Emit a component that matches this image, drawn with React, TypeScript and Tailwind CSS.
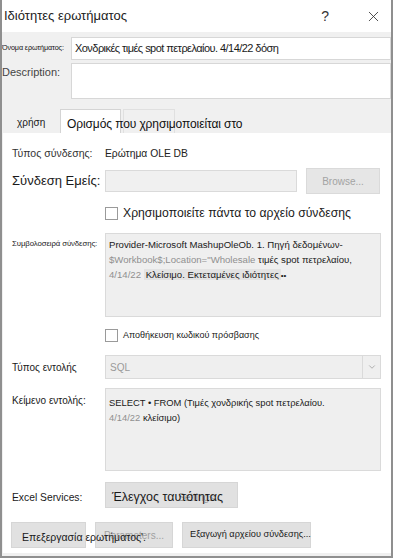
import React from 'react';
import { X, ChevronDown } from 'lucide-react';

const font = { fontFamily: '"Liberation Sans", "Noto Sans", Arial, sans-serif' };

const Checkbox: React.FC<{ label: string; className?: string }> = ({ label, className }) => (
  <div className={`flex items-center h-[17px] ${className ?? ''}`}>
    <span className="w-[13px] h-[13px] border border-[#9a9a9a] bg-white shrink-0" />
    <span className="ml-[5px] whitespace-nowrap">{label}</span>
  </div>
);

const App: React.FC = () => {
  return (
    <div
      className="w-[393px] h-[558px] bg-[#f0f0f0] border-x-2 border-b-2 border-[#8f8f8f] text-[#1a1a1a] flex flex-col overflow-hidden"
      style={font}
    >
      {/* title bar */}
      <div className="h-[32px] bg-white flex items-center shrink-0 -mx-[2px] pl-[4px] pr-[11px]">
        <span className="text-[13px] text-[#222]">Ιδιότητες ερωτήματος</span>
        <span className="ml-auto text-[14px] mr-[36px] text-[#333]">?</span>
        <X size={17} strokeWidth={1.2} className="text-[#333]" />
      </div>

      {/* name + description */}
      <div className="flex items-center mt-[5px] h-[23px]">
        <span className="w-[69px] text-[7.2px] tracking-[-0.1px] whitespace-nowrap text-[#111]">Όνομα ερωτήματος:</span>
        <div className="flex-1 h-full bg-white border border-[#d7d7d7] flex items-center px-[3px] text-[11px] tracking-[-0.55px] whitespace-nowrap overflow-hidden">
          Χονδρικές τιμές spot πετρελαίου. 4/14/22 δόση
        </div>
      </div>
      <div className="flex mt-[3px] h-[36px]">
        <span className="w-[69px] text-[11px] pt-[1px] text-[#444]">Description:</span>
        <div className="flex-1 h-full bg-white border border-[#d7d7d7]" />
      </div>

      {/* tabs */}
      <div className="flex items-end h-[25px] mt-[9px]">
        <div className="w-[55px] h-[22px] flex items-center pl-[15px] text-[10px]">χρήση</div>
        <div className="w-[61px] h-[24px] ml-[3px] bg-white border-x border-t border-[#d4d4d4] relative">
          <span className="absolute left-[6px] top-[5px] text-[12px] tracking-[-0.1px] whitespace-nowrap text-[#111]">
            Ορισμός που χρησιμοποιείται στο
          </span>
        </div>
        <div className="w-[52px] h-[24px] ml-[2px] border-x border-t border-[#e0e0e0]" />
      </div>

      {/* panel */}
      <div className="flex-1 bg-white ml-[1px] mb-[3px] pl-[9px] pr-[9px] flex flex-col text-[10px]">
        <div className="flex items-center h-[16px] mt-[13px] text-[#333]">
          <span className="w-[93px] text-[10.5px]">Τύπος σύνδεσης:</span>
          <span className="text-[#222] text-[10.3px]">Ερώτημα OLE DB</span>
        </div>

        <div className="flex items-center h-[26px] mt-[6px]">
          <span className="w-[93px] text-[13px] whitespace-nowrap">Σύνδεση Εμείς:</span>
          <div className="w-[192px] h-[22px] bg-[#f0f0f0] border border-[#dadada]" />
          <div className="ml-[9px] w-[74px] h-[26px] bg-[#e6e6e6] border border-[#dadada] flex items-center justify-center text-[#a3a3a3] text-[10px]">
            Browse...
          </div>
        </div>

        <Checkbox label="Χρησιμοποιείτε πάντα το αρχείο σύνδεσης" className="ml-[93px] mt-[11px] text-[12.2px]" />

        <div className="flex mt-[11px]">
          <span className="w-[93px] text-[7.8px] tracking-[-0.1px] pt-[5px] whitespace-nowrap">Συμβολοσειρά σύνδεσης:</span>
          <div className="w-[276px] h-[84px] bg-[#efefef] border border-[#dadada] px-[3px] pt-[3px] leading-[15px] whitespace-nowrap text-[9.6px]">
            <div>Provider-Microsoft MashupOleOb. 1. Πηγή δεδομένων-</div>
            <div>
              <span className="text-[#8f8f8f]">$Workbook$;Location="Wholesale</span> τιμές spot πετρελαίου,
            </div>
            <div>
              <span className="text-[#8f8f8f]">4/14/22</span>{'  '}
              <span className="bg-[#e3e3e3] px-[2px]">Κλείσιμο. Εκτεταμένες ιδιότητες</span>
              <span className="text-[8px]">••</span>
            </div>
          </div>
        </div>

        <Checkbox label="Αποθήκευση κωδικού πρόσβασης" className="ml-[93px] mt-[10px] text-[9px]" />

        <div className="flex items-center mt-[11px] h-[24px]">
          <span className="w-[93px]">Τύπος εντολής</span>
          <div className="w-[276px] h-[24px] bg-[#efefef] border border-[#dadada] flex items-center">
            <span className="pl-[4px] text-[#9a9a9a]">SQL</span>
            <div className="ml-auto w-[18px] h-full border-l border-[#dadada] flex items-center justify-center">
              <ChevronDown size={10} strokeWidth={1.5} className="text-[#888]" />
            </div>
          </div>
        </div>

        <div className="flex mt-[9px]">
          <span className="w-[93px] pt-[5px]">Κείμενο εντολής:</span>
          <div className="w-[276px] h-[83px] bg-[#efefef] border border-[#dadada] px-[3px] pt-[6px] leading-[15px] whitespace-nowrap text-[9.4px]">
            <div>SELECT • FROM (Τιμές χονδρικής spot πετρελαίου.</div>
            <div>
              <span className="text-[#8f8f8f]">4/14/22</span>{'   '}κλείσιμο)
            </div>
          </div>
        </div>

        <div className="flex items-center mt-[11px] h-[26px]">
          <span className="w-[93px] pt-[6px] text-[10.3px]">Excel Services:</span>
          <div className="w-[133px] h-[26px] bg-[#e1e1e1] border border-[#d6d6d6] relative">
            <span className="absolute left-[72px] top-[7px] text-[#9a9a9a] text-[10px]">Settings...</span>
            <span className="absolute left-[6px] top-[5px] text-[12.5px] whitespace-nowrap">Έλεγχος ταυτότητας</span>
          </div>
        </div>

        <div className="flex items-center mt-[14px] h-[26px] -ml-[1px]">
          <div className="w-[75px] h-[26px] bg-[#e1e1e1] border border-[#d6d6d6] relative">
            <span className="absolute left-[10px] top-[7px] text-[10.5px] whitespace-nowrap z-10">
              Επεξεργασία ερωτήματος'.
            </span>
          </div>
          <div className="ml-[9px] w-[78px] h-[26px] bg-[#e1e1e1] border border-[#d6d6d6] flex items-center pl-[8px] text-[#a0a0a0] text-[10px]">
            Parameters...
          </div>
          <div className="ml-[9px] w-[129px] h-[26px] bg-[#e1e1e1] border border-[#d6d6d6] flex items-center pl-[7px] whitespace-nowrap text-[9.2px]">
            Εξαγωγή αρχείου σύνδεσης...
          </div>
        </div>
      </div>
    </div>
  );
};

export default App;
